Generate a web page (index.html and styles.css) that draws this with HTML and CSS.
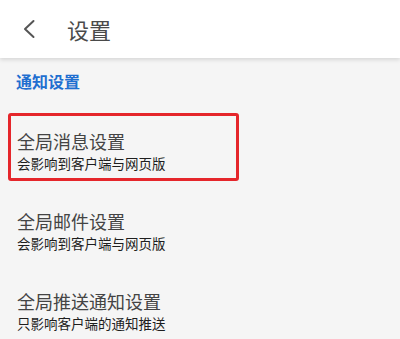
FILE: index.html
```html
<!DOCTYPE html>
<html lang="zh">
<head>
<meta charset="utf-8">
<link rel="stylesheet" href="styles.css">
</head>
<body>
<div class="page">
  <header class="topbar">
    <svg class="back" width="14" height="20" viewBox="0 0 14 20"><polyline points="11.5,2 3,10 11.5,18" fill="none" stroke="#555" stroke-width="2" stroke-linecap="round" stroke-linejoin="round"/></svg>
    <span class="title">设置</span>
  </header>
  <div class="section-label">通知设置</div>
  <ul class="list">
    <li class="item">
      <div class="highlight"></div>
      <div class="item-title">全局消息设置</div>
      <div class="item-sub">会影响到客户端与网页版</div>
    </li>
    <li class="item">
      <div class="item-title">全局邮件设置</div>
      <div class="item-sub">会影响到客户端与网页版</div>
    </li>
    <li class="item">
      <div class="item-title">全局推送通知设置</div>
      <div class="item-sub">只影响客户端的通知推送</div>
    </li>
  </ul>
</div>
</body>
</html>
```
FILE: styles.css
```css
html, body {
  margin: 0;
  padding: 0;
}
body {
  background: #f5f5f5;
  font-family: "Noto Sans CJK SC", "Noto Sans", sans-serif;
  width: 400px;
  height: 339px;
  overflow: hidden;
}
.page {
  display: flex;
  flex-direction: column;
}
.topbar {
  height: 58px;
  background: #fff;
  box-shadow: 0 2px 4px rgba(0, 0, 0, 0.12);
  display: flex;
  align-items: center;
  padding-left: 22px;
  position: relative;
  z-index: 1;
}
.back {
  display: block;
  margin-right: 31px;
}
.title {
  font-size: 22px;
  color: #4a4a4a;
  line-height: 28px;
}
.section-label {
  margin-top: 13px;
  padding-left: 16px;
  font-size: 16px;
  line-height: 20px;
  font-weight: 700;
  color: #1f6fd0;
}
.list {
  list-style: none;
  margin: 22px 0 0;
  padding: 0;
}
.item {
  position: relative;
  height: 80px;
  box-sizing: border-box;
  padding: 15px 17px 0;
}
.highlight {
  position: absolute;
  left: 8px;
  top: 0;
  width: 231px;
  height: 68px;
  box-sizing: border-box;
  border: 3px solid #e5262b;
  border-radius: 3px;
}
.item-title {
  font-size: 18px;
  line-height: 26px;
  color: #444;
}
.item-sub {
  font-size: 13.5px;
  line-height: 18px;
  color: #1e1e1e;
}
```
